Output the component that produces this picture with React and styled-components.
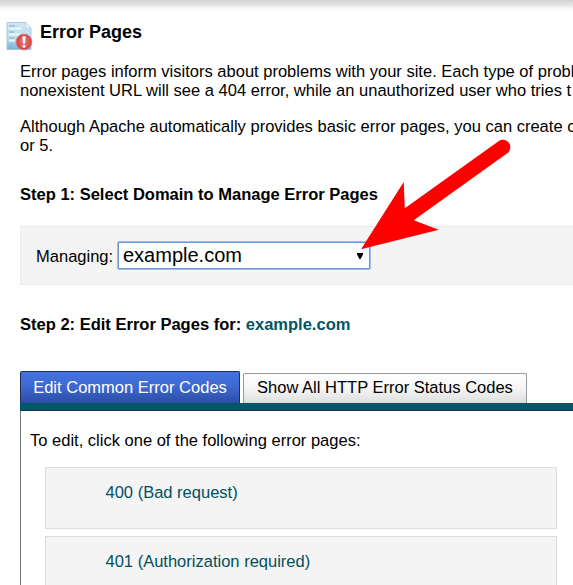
import React from "react";
import styled, { createGlobalStyle, css } from "styled-components";

const GlobalStyle = createGlobalStyle`
  * { box-sizing: border-box; }
  body {
    margin: 0;
    overflow: hidden;
    background: #fff;
    color: #000;
    font: 16.53px/19px "Liberation Sans", Arial, sans-serif;
  }
`;

const Page = styled.main`
  position: relative;
  width: 573px;
  height: 585px;
  overflow: hidden;
  display: flex;
  flex-direction: column;
`;

const TopShade = styled.div`
  flex: none;
  height: 12px;
  background: linear-gradient(#d2d2d2 0%, #dcdcdc 25%, #f4f4f4 65%, #fff 100%);
`;

const Header = styled.header`
  flex: none;
  display: flex;
  height: 50px;
  padding: 9px 0 0 6px;
`;

const HeaderIcon = styled.svg`
  flex: none;
  width: 28px;
  height: 30px;
`;

const Title = styled.h1`
  margin: 0 0 0 6px;
  font-size: 18px;
  line-height: 22px;
`;

const Content = styled.div`
  flex: none;
  width: 640px;
  padding-left: 20px;
`;

const Paragraph = styled.p`
  margin: 0 0 17px;
  height: 38px;
  white-space: nowrap;
`;

const StepTitle = styled.h2`
  margin: ${({ $top }) => $top}px 0 0;
  font-size: 16.53px;
  line-height: 19px;
`;

const Domain = styled.span`
  color: #005566;
`;

const Manager = styled.div`
  display: flex;
  align-items: flex-start;
  height: 59px;
  margin-top: 22px;
  padding: 14px 0 0 15px;
  background: #f4f4f4;
  border: 1px solid #ebebeb;
`;

const Label = styled.label`
  width: 82px;
  padding-top: 6px;
`;

const Select = styled.div`
  display: flex;
  align-items: center;
  justify-content: space-between;
  width: 252px;
  height: 27px;
  margin-top: 1px;
  padding: 0 6px 0 4px;
  background: #fff;
  border: 1px solid #7093d2;
  box-shadow: 0 0 0 1px #9dbdf2;
  border-radius: 1px;
  font-size: 20px;
  line-height: 23px;
`;

const Caret = styled.svg`
  width: 6px;
  height: 6px;
`;

const Tabs = styled.div`
  display: flex;
  align-items: flex-end;
  gap: 3px;
  height: 32px;
  margin-top: 37px;
`;

const Tab = styled.div`
  padding-top: 4px;
  border: 1px solid #999;
  border-bottom: 0;
  border-radius: 2px 2px 0 0;
  text-align: center;
  white-space: nowrap;
  ${({ $active }) =>
    $active
      ? css`
          width: 220px;
          height: 32px;
          padding-top: 6px;
          color: #fff;
          border-color: #1d3059;
          background: linear-gradient(#4372df, #3f69d1 45%, #2a4da6);
        `
      : css`
          width: 284px;
          height: 30px;
          background: linear-gradient(#fff, #f5f5f5 50%, #dcdedd);
        `}
`;

const TabBar = styled.div`
  height: 8px;
  background: #005768;
  border-bottom: 1px solid #1d3059;
`;

const TabPanel = styled.section`
  height: 190px;
  padding: 20px 0 0 9px;
  border-left: 1px solid #777;
`;

const CodeList = styled.div`
  display: flex;
  flex-direction: column;
  gap: 7px;
  margin: 17px 0 0 15px;
`;

const CodeRow = styled.div`
  width: 512px;
  height: 62px;
  padding: 15px 0 0 59.5px;
  color: #005060;
  background: #f4f4f4;
  border: 1px solid #ddd;
`;

const Pointer = styled.svg`
  position: absolute;
  inset: 0;
  width: 573px;
  height: 585px;
  pointer-events: none;
`;

const CODES = ["400 (Bad request)", "401 (Authorization required)"];

function ErrorPageIcon() {
  return (
    <HeaderIcon viewBox="0 0 28 30">
      <defs>
        <linearGradient id="sheet" x1="0" y1="0" x2="0" y2="1">
          <stop offset="0" stopColor="#cfe5f2" />
          <stop offset="0.55" stopColor="#c3dff0" />
          <stop offset="1" stopColor="#79b0d6" />
        </linearGradient>
        <radialGradient id="alert" cx="0.5" cy="0.5" r="0.5">
          <stop offset="0" stopColor="#e8807e" />
          <stop offset="0.65" stopColor="#de5558" />
          <stop offset="1" stopColor="#cf3e45" />
        </radialGradient>
      </defs>
      <path d="M1 1.5H20L25 7V28.5H1Z" fill="url(#sheet)" stroke="#9cc3d9" strokeWidth="0.8" />
      <path d="M20 1.5V7H25Z" fill="#eef8fc" stroke="#b5d5e4" strokeWidth="0.6" />
      <path d="M3 5H9M3 11H8M3 17H8M3 23.5H7" stroke="#8dbddb" strokeWidth="1.6" />
      <path d="M3 7.5H15M3 13.5H14M3 19.5H9" stroke="#ecf7fc" strokeWidth="2" />
      <circle cx="18" cy="21" r="8" fill="url(#alert)" stroke="#dc8d90" strokeWidth="0.7" />
      <path d="M16.3 15.2H19.7L19 22.5H17Z" fill="#fff" />
      <circle cx="18" cy="25.2" r="1.5" fill="#fff" />
    </HeaderIcon>
  );
}

export default function App() {
  return (
    <>
      <GlobalStyle />
      <Page>
        <TopShade />
        <Header>
          <ErrorPageIcon />
          <Title>Error Pages</Title>
        </Header>
        <Content>
          <Paragraph>
            Error pages inform visitors about problems with your site. Each type of probl
            <br />
            nonexistent URL will see a 404 error, while an unauthorized user who tries t
          </Paragraph>
          <Paragraph>
            Although Apache automatically provides basic error pages, you can create c
            <br />
            or 5.
          </Paragraph>
          <StepTitle $top={30}>Step 1: Select Domain to Manage Error Pages</StepTitle>
          <Manager>
            <Label>Managing:</Label>
            <Select>
              example.com
              <Caret viewBox="0 0 6 6">
                <path d="M0 0H6V1.2L3.6 6H2.4L0 1.2Z" />
              </Caret>
            </Select>
          </Manager>
          <StepTitle $top={30}>
            Step 2: Edit Error Pages for: <Domain>example.com</Domain>
          </StepTitle>
          <Tabs>
            <Tab $active>Edit Common Error Codes</Tab>
            <Tab>Show All HTTP Error Status Codes</Tab>
          </Tabs>
          <TabBar />
          <TabPanel>
            To edit, click one of the following error pages:
            <CodeList>
              {CODES.map((code) => (
                <CodeRow key={code}>{code}</CodeRow>
              ))}
            </CodeList>
          </TabPanel>
        </Content>
        <Pointer viewBox="0 0 573 585">
          <path
            d="M361 249.3L403.7 182L404.8 208.2L498.5 141.2A7.3 7.3 0 0 1 507.3 153.2L413.7 220.3L438.7 229.8Z"
            fill="#f00"
          />
        </Pointer>
      </Page>
    </>
  );
}
